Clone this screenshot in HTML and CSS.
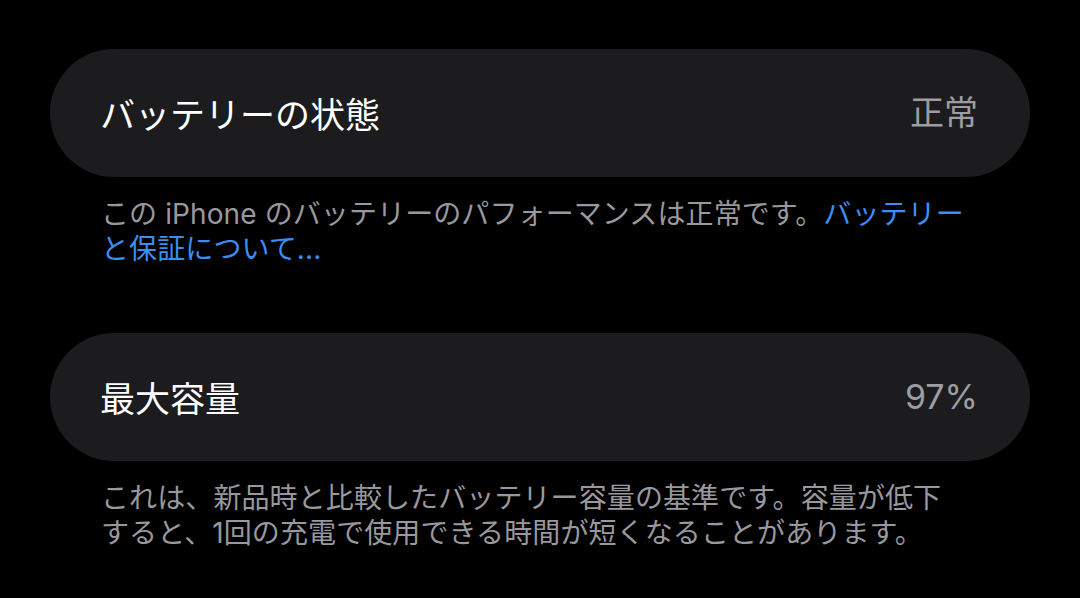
FILE: index.html
```html
<!DOCTYPE html>
<html lang="ja">
<head>
<meta charset="utf-8">
<link rel="stylesheet" href="styles.css">
</head>
<body>
<main class="page">
  <section class="group">
    <div class="card">
      <span class="label">バッテリーの状態</span>
      <span class="value">正常</span>
    </div>
    <p class="note">この iPhone のバッテリーのパフォーマンスは正常です。<a class="link">バッテリーと保証について...</a></p>
  </section>
  <section class="group">
    <div class="card">
      <span class="label">最大容量</span>
      <span class="value">97%</span>
    </div>
    <p class="note">これは、新品時と比較したバッテリー容量の基準です。容量が低下すると、1回の充電で使用できる時間が短くなることがあります。</p>
  </section>
</main>
</body>
</html>
```
FILE: styles.css
```css
html, body {
  margin: 0;
  padding: 0;
  background: #000;
}
body {
  width: 1080px;
  height: 598px;
  overflow: hidden;
  font-family: "Inter", "Noto Sans CJK JP", sans-serif;
}
.page {
  display: flex;
  flex-direction: column;
  gap: 66px;
  padding: 49px 50px 0 50px;
}
.group {
  display: flex;
  flex-direction: column;
}
.card {
  height: 128px;
  box-sizing: border-box;
  border-radius: 64px;
  background: #1c1c1e;
  display: flex;
  align-items: center;
  justify-content: space-between;
  padding: 0 52px 0 50px;
}
.label {
  color: #ffffff;
  font-size: 35px;
  line-height: 40px;
  font-family: "Noto Sans CJK JP", sans-serif;
}
.value {
  color: #9d9da3;
  font-size: 34px;
  line-height: 40px;
}
.note {
  margin: 20px 0 0 0;
  padding: 0 63px 0 51px;
  color: #98989e;
  font-size: 28px;
  line-height: 35px;
  letter-spacing: 0.1px;
}
.link {
  color: #3b8ef5;
}
```
